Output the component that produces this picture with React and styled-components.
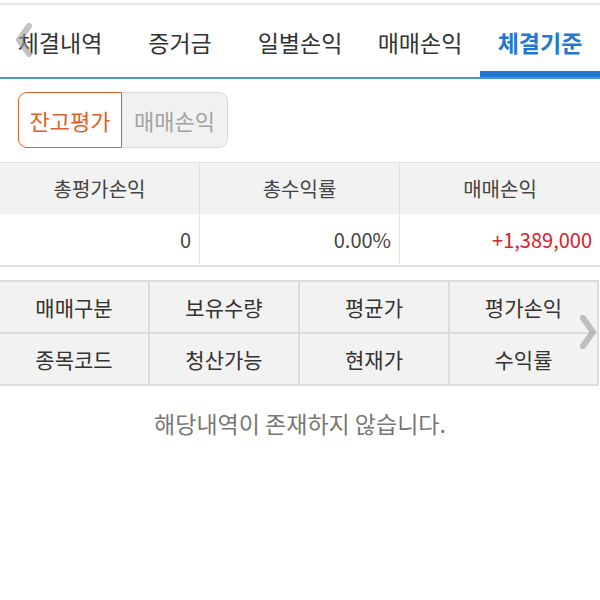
import React from "react";
import styled, { createGlobalStyle } from "styled-components";

const GlobalStyle = createGlobalStyle`
  html, body {
    margin: 0;
    padding: 0;
    background: #ffffff;
  }
  body {
    font-family: "Noto Sans CJK KR", "Noto Sans", sans-serif;
    color: #333333;
  }
`;

const Page = styled.div`
  position: relative;
  width: 600px;
  height: 600px;
  overflow: hidden;
  background: #ffffff;
`;

const TopRule = styled.div`
  height: 2px;
  margin-top: 3px;
  background: #e8e8e8;
`;

const TabBar = styled.div`
  display: flex;
  height: 72px;
  border-bottom: 2px solid #4a94dc;
`;

const Tab = styled.div`
  position: relative;
  flex: 1;
  display: flex;
  align-items: center;
  justify-content: center;
  padding-top: 2px;
  font-size: 23px;
  font-weight: ${(p) => (p.$active ? 700 : 400)};
  color: ${(p) => (p.$active ? "#1f78d1" : "#333333")};

  &::after {
    content: "";
    display: ${(p) => (p.$active ? "block" : "none")};
    position: absolute;
    left: 0;
    right: 0;
    bottom: 0;
    height: 6px;
    background: #1f78d1;
  }
`;

const ScrollArrow = styled.div`
  position: absolute;
  top: ${(p) => p.$top}px;
  ${(p) => (p.$side === "left" ? "left: 14px;" : "left: 578px;")}
  width: 20px;
  height: 36px;
  opacity: 0.6;
  pointer-events: none;
`;

const Segment = styled.div`
  display: flex;
  margin: 13px 0 0 18px;
  height: 56px;
`;

const SegButton = styled.div`
  display: flex;
  align-items: center;
  justify-content: center;
  box-sizing: border-box;
  width: ${(p) => (p.$active ? 104 : 106)}px;
  font-size: 22px;
  color: ${(p) => (p.$active ? "#e0602a" : "#a3a3a3")};
  background: ${(p) => (p.$active ? "#ffffff" : "#f1f1f1")};
  border: 1px solid ${(p) => (p.$active ? "#e0602a" : "#dadada")};
  border-radius: ${(p) => (p.$active ? "9px 0 0 9px" : "0 9px 9px 0")};
  ${(p) => (p.$active ? "" : "border-left: none;")}
`;

const SummaryTable = styled.div`
  display: grid;
  grid-template-columns: 199px 200px 201px;
  margin-top: 14px;
  border-top: 1px solid #e2e2e2;
  border-bottom: 2px solid #e2e2e2;
`;

const SumHead = styled.div`
  display: flex;
  align-items: center;
  justify-content: center;
  height: 51px;
  font-size: 20px;
  color: #444444;
  background: #f2f2f2;
  border-left: ${(p) => (p.$first ? "none" : "1px solid #e2e2e2")};
`;

const SumValue = styled.div`
  display: flex;
  align-items: center;
  justify-content: flex-end;
  height: 51px;
  padding-right: 8px;
  font-size: 20px;
  color: ${(p) => (p.$red ? "#d3212c" : "#444444")};
  background: #ffffff;
  border-left: ${(p) => (p.$first ? "none" : "1px solid #e2e2e2")};
`;

const GridTable = styled.div`
  display: grid;
  grid-template-columns: 148px 150px 150px 149px;
  width: 597px;
  margin-top: 13px;
  background: #f2f2f2;
  border-top: 2px solid #dcdcdc;
  border-right: 2px solid #dcdcdc;
  border-bottom: 2px solid #dcdcdc;
`;

const GridCell = styled.div`
  display: flex;
  align-items: center;
  justify-content: center;
  height: 50px;
  font-size: 21px;
  color: #333333;
  border-left: ${(p) => (p.$first ? "none" : "2px solid #dcdcdc")};
  border-top: ${(p) => (p.$topRow ? "none" : "2px solid #dcdcdc")};
`;

const Empty = styled.div`
  margin-top: 20px;
  text-align: center;
  font-size: 23px;
  color: #777777;
`;

const Chevron = ({ dir }) => (
  <svg width="20" height="36" viewBox="0 0 20 36">
    <path
      d={dir === "left" ? "M15 4 L5 18 L15 32" : "M5 4 L15 18 L5 32"}
      fill="none"
      stroke="#9a9a9a"
      strokeWidth="6"
      strokeLinecap="round"
      strokeLinejoin="round"
    />
  </svg>
);

const tabs = ["체결내역", "증거금", "일별손익", "매매손익", "체결기준"];
const summary = [
  { label: "총평가손익", value: "0" },
  { label: "총수익률", value: "0.00%" },
  { label: "매매손익", value: "+1,389,000", red: true },
];
const gridRows = [
  ["매매구분", "보유수량", "평균가", "평가손익"],
  ["종목코드", "청산가능", "현재가", "수익률"],
];

export default function App() {
  return (
    <Page>
      <GlobalStyle />
      <TopRule />
      <TabBar>
        {tabs.map((t, i) => (
          <Tab key={t} $active={i === tabs.length - 1}>
            {t}
          </Tab>
        ))}
      </TabBar>
      <ScrollArrow $side="left" $top={22}>
        <Chevron dir="left" />
      </ScrollArrow>

      <Segment>
        <SegButton $active>잔고평가</SegButton>
        <SegButton>매매손익</SegButton>
      </Segment>

      <SummaryTable>
        {summary.map((s, i) => (
          <SumHead key={s.label} $first={i === 0}>
            {s.label}
          </SumHead>
        ))}
        {summary.map((s, i) => (
          <SumValue key={s.label} $first={i === 0} $red={s.red}>
            {s.value}
          </SumValue>
        ))}
      </SummaryTable>

      <GridTable>
        {gridRows.map((row, r) =>
          row.map((c, i) => (
            <GridCell key={c} $first={i === 0} $topRow={r === 0}>
              {c}
            </GridCell>
          ))
        )}
      </GridTable>
      <ScrollArrow $side="right" $top={314}>
        <Chevron dir="right" />
      </ScrollArrow>

      <Empty>해당내역이 존재하지 않습니다.</Empty>
    </Page>
  );
}
